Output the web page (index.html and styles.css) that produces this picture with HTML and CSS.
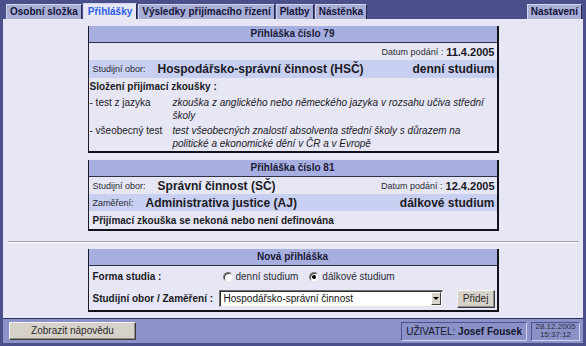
FILE: index.html
```html
<!DOCTYPE html>
<html lang="cs">
<head>
<meta charset="utf-8">
<title>Přihlášky</title>
<link rel="stylesheet" href="styles.css">
</head>
<body>
<div class="app">
  <div class="tabbar">
    <div class="tab">Osobní složka</div>
    <div class="tab active">Přihlášky</div>
    <div class="tab">Výsledky přijímacího řízení</div>
    <div class="tab">Platby</div>
    <div class="tab">Nástěnka</div>
    <div class="tab tab-right">Nastavení</div>
  </div>

  <div class="content">
    <div class="card">
      <div class="card-head">Přihláška číslo 79</div>
      <div class="row row-date"><span class="lbl">Datum podání :</span><b class="date">11.4.2005</b></div>
      <div class="row row-blue row-tall">
        <span class="lbl">Studijní obor:</span><b class="val">Hospodářsko-správní činnost (HSČ)</b><b class="val val-right">denní studium</b>
      </div>
      <div class="exam-title">Složení přijímací zkoušky :</div>
      <div class="exam-item">
        <div class="exam-name">- test z jazyka</div>
        <div class="exam-desc">zkouška z anglického nebo německého jazyka v rozsahu učiva střední školy</div>
      </div>
      <div class="exam-item">
        <div class="exam-name">- všeobecný test</div>
        <div class="exam-desc">test všeobecných znalostí absolventa střední školy s důrazem na politické a ekonomické dění v ČR a v Evropě</div>
      </div>
    </div>

    <div class="card card-2">
      <div class="card-head">Přihláška číslo 81</div>
      <div class="row">
        <span class="lbl">Studijní obor:</span><b class="val">Správní činnost (SČ)</b>
        <span class="right-part"><span class="lbl">Datum podání :</span><b class="date">12.4.2005</b></span>
      </div>
      <div class="row row-blue">
        <span class="lbl">Zaměření:</span><b class="val">Administrativa justice (AJ)</b><b class="val val-right">dálkové studium</b>
      </div>
      <div class="row row-note"><b>Přijímací zkouška se nekoná nebo není definována</b></div>
    </div>

    <div class="separator"></div>

    <div class="card card-3">
      <div class="card-head">Nová přihláška</div>
      <div class="form-row form-row-radio">
        <b class="form-label">Forma studia :</b>
        <span class="radio-group">
          <span class="radio"></span><span class="radio-text">denní studium</span>
          <span class="radio checked"></span><span class="radio-text">dálkové studium</span>
        </span>
      </div>
      <div class="form-row form-row-select">
        <b class="form-label">Studijní obor / Zaměření :</b>
        <span class="select"><span class="select-text">Hospodářsko-správní činnost</span><span class="select-arrow"><span class="tri"></span></span></span>
        <span class="btn btn-add">Přidej</span>
      </div>
    </div>
  </div>

  <div class="footer">
    <span class="btn btn-help">Zobrazit nápovědu</span>
    <span class="user-box">UŽIVATEL: <b>Josef Fousek</b></span>
    <span class="date-box"><span>28.12.2005</span><span>15:37:12</span></span>
  </div>
</div>
</body>
</html>
```

FILE: styles.css
```css
html, body {
  margin: 0;
  padding: 0;
}
body {
  background: #4b4f8a;
  font-family: "Liberation Sans", Arial, sans-serif;
  color: #1a1a24;
}
.app {
  width: 586px;
  height: 346px;
  display: flex;
  flex-direction: column;
}

/* tabs */
.tabbar {
  height: 19px;
  display: flex;
  align-items: flex-end;
  gap: 1px;
  padding: 0 4px 0 6px;
  box-sizing: border-box;
}
.tab {
  height: 14px;
  line-height: 14px;
  padding: 0 3px;
  font-size: 10px;
  font-weight: bold;
  background: #a9aed6;
  color: #14143a;
  border-top: 1px solid #d2d6ef;
  border-left: 1px solid #d2d6ef;
  border-right: 1px solid #25284e;
  white-space: nowrap;
}
.tab.active {
  height: 15px;
  line-height: 15px;
  background: #e6e6f5;
  color: #2d5fe8;
  padding: 0 4px;
}
.tab-right {
  margin-left: auto;
}

/* content */
.content {
  margin: 0 3px;
  height: 299px;
  background: #e6e6f5;
  padding-top: 7px;
  box-sizing: border-box;
}
.card {
  width: 411px;
  margin: 0 auto;
  box-sizing: border-box;
  border-left: 1px solid #1c1c28;
  border-right: 2px solid #111118;
  border-bottom: 2px solid #111118;
  background: #e6e6f5;
}
.card-2 {
  margin-top: 7px;
}
.card-3 {
  margin-top: 6px;
}
.card-head {
  height: 16px;
  line-height: 16px;
  background: #a7afe0;
  border-bottom: 1px solid #2e3048;
  text-align: center;
  font-weight: bold;
  font-size: 10px;
  color: #1a1a36;
}
.row {
  height: 17px;
  display: flex;
  align-items: center;
  padding: 0 2px 0 4px;
  white-space: nowrap;
}
.row-tall {
  height: 18px;
}
.row-blue {
  background: #c9cff1;
}
.row-date {
  justify-content: flex-end;
}
.row-note {
  height: 18px;
  font-size: 10px;
  padding-left: 4px;
}
.lbl {
  font-size: 9px;
  color: #2a2a34;
  margin-right: 3px;
}
.date {
  font-size: 11px;
  font-weight: bold;
}
.val {
  font-size: 12px;
  font-weight: bold;
  margin-left: 9px;
}
.val-right {
  margin-left: auto;
}
.right-part {
  margin-left: auto;
  display: flex;
  align-items: center;
}

.exam-title {
  margin-top: 2px;
  padding-left: 1px;
  font-size: 10px;
  font-weight: bold;
  line-height: 14px;
}
.exam-item {
  display: flex;
  padding: 2px 2px 0 1px;
  font-size: 10px;
  line-height: 13px;
}
.exam-item:last-child {
  padding-bottom: 1px;
}
.exam-name {
  width: 83px;
  flex: none;
}
.exam-desc {
  flex: 1;
  font-style: italic;
}

.separator {
  margin: 10px 4px 0 5px;
  border-top: 1px solid #a2a2ae;
  border-bottom: 1px solid #ffffff;
}

/* new application form */
.form-row {
  display: flex;
  align-items: center;
  padding: 0 2px 0 4px;
  font-size: 10px;
}
.form-row-radio {
  height: 21px;
}
.form-row-select {
  height: 23px;
}
.form-label {
  width: 126px;
  flex: none;
  white-space: nowrap;
}
.radio-group {
  display: flex;
  align-items: center;
  padding-left: 4px;
}
.radio {
  width: 8px;
  height: 8px;
  border-radius: 50%;
  background: #ffffff;
  border: 1px solid;
  border-color: #7a7a7a #e8e8e8 #e8e8e8 #7a7a7a;
  box-shadow: inset 1px 1px 0 #404040;
  position: relative;
  margin-right: 3px;
}
.radio.checked::after {
  content: "";
  position: absolute;
  left: 2px;
  top: 2px;
  width: 4px;
  height: 4px;
  border-radius: 50%;
  background: #000000;
}
.radio-text {
  color: #2a2a34;
  margin-right: 11px;
}
.select {
  width: 225px;
  height: 17px;
  box-sizing: border-box;
  display: flex;
  align-items: center;
  background: #ffffff;
  border: 1px solid;
  border-color: #6e6e6e #e4e4e4 #e4e4e4 #6e6e6e;
  box-shadow: inset 1px 1px 0 #303030;
}
.select-text {
  flex: 1;
  padding-left: 4px;
  color: #111111;
}
.select-arrow {
  width: 10px;
  height: 13px;
  margin-right: 1px;
  background: #d6d2ca;
  border: 1px solid;
  border-color: #ffffff #404040 #404040 #ffffff;
  box-sizing: border-box;
  display: flex;
  align-items: center;
  justify-content: center;
}
.tri {
  width: 0;
  height: 0;
  border-left: 3px solid transparent;
  border-right: 3px solid transparent;
  border-top: 3px solid #000000;
}
.btn {
  background: #d6d2ca;
  border: 1px solid;
  border-color: #f4f4f4 #3a3a3a #3a3a3a #f4f4f4;
  box-shadow: inset -1px -1px 0 #8c8c8c;
  box-sizing: border-box;
  text-align: center;
  font-size: 10px;
  color: #2a2a2a;
}
.btn-add {
  margin-left: 14px;
  width: 38px;
  height: 18px;
  line-height: 16px;
}

/* footer */
.footer {
  margin: 0 3px;
  height: 25px;
  border-top: 1px solid #2b2e5a;
  background: #8a92c8;
  box-sizing: border-box;
  display: flex;
  align-items: center;
  padding: 0 3px 0 6px;
}
.btn-help {
  width: 127px;
  height: 18px;
  line-height: 16px;
}
.user-box {
  margin-left: auto;
  height: 19px;
  line-height: 17px;
  padding: 0 4px;
  box-sizing: border-box;
  border: 1px solid;
  border-color: #4e5390 #d0d4f2 #d0d4f2 #4e5390;
  font-size: 10px;
  color: #14142a;
  white-space: nowrap;
}
.date-box {
  margin-left: 4px;
  width: 49px;
  height: 19px;
  box-sizing: border-box;
  border: 1px solid;
  border-color: #4e5390 #d0d4f2 #d0d4f2 #4e5390;
  display: flex;
  flex-direction: column;
  align-items: center;
  justify-content: center;
  font-size: 8px;
  line-height: 8px;
  color: #2c2c3c;
}
```
